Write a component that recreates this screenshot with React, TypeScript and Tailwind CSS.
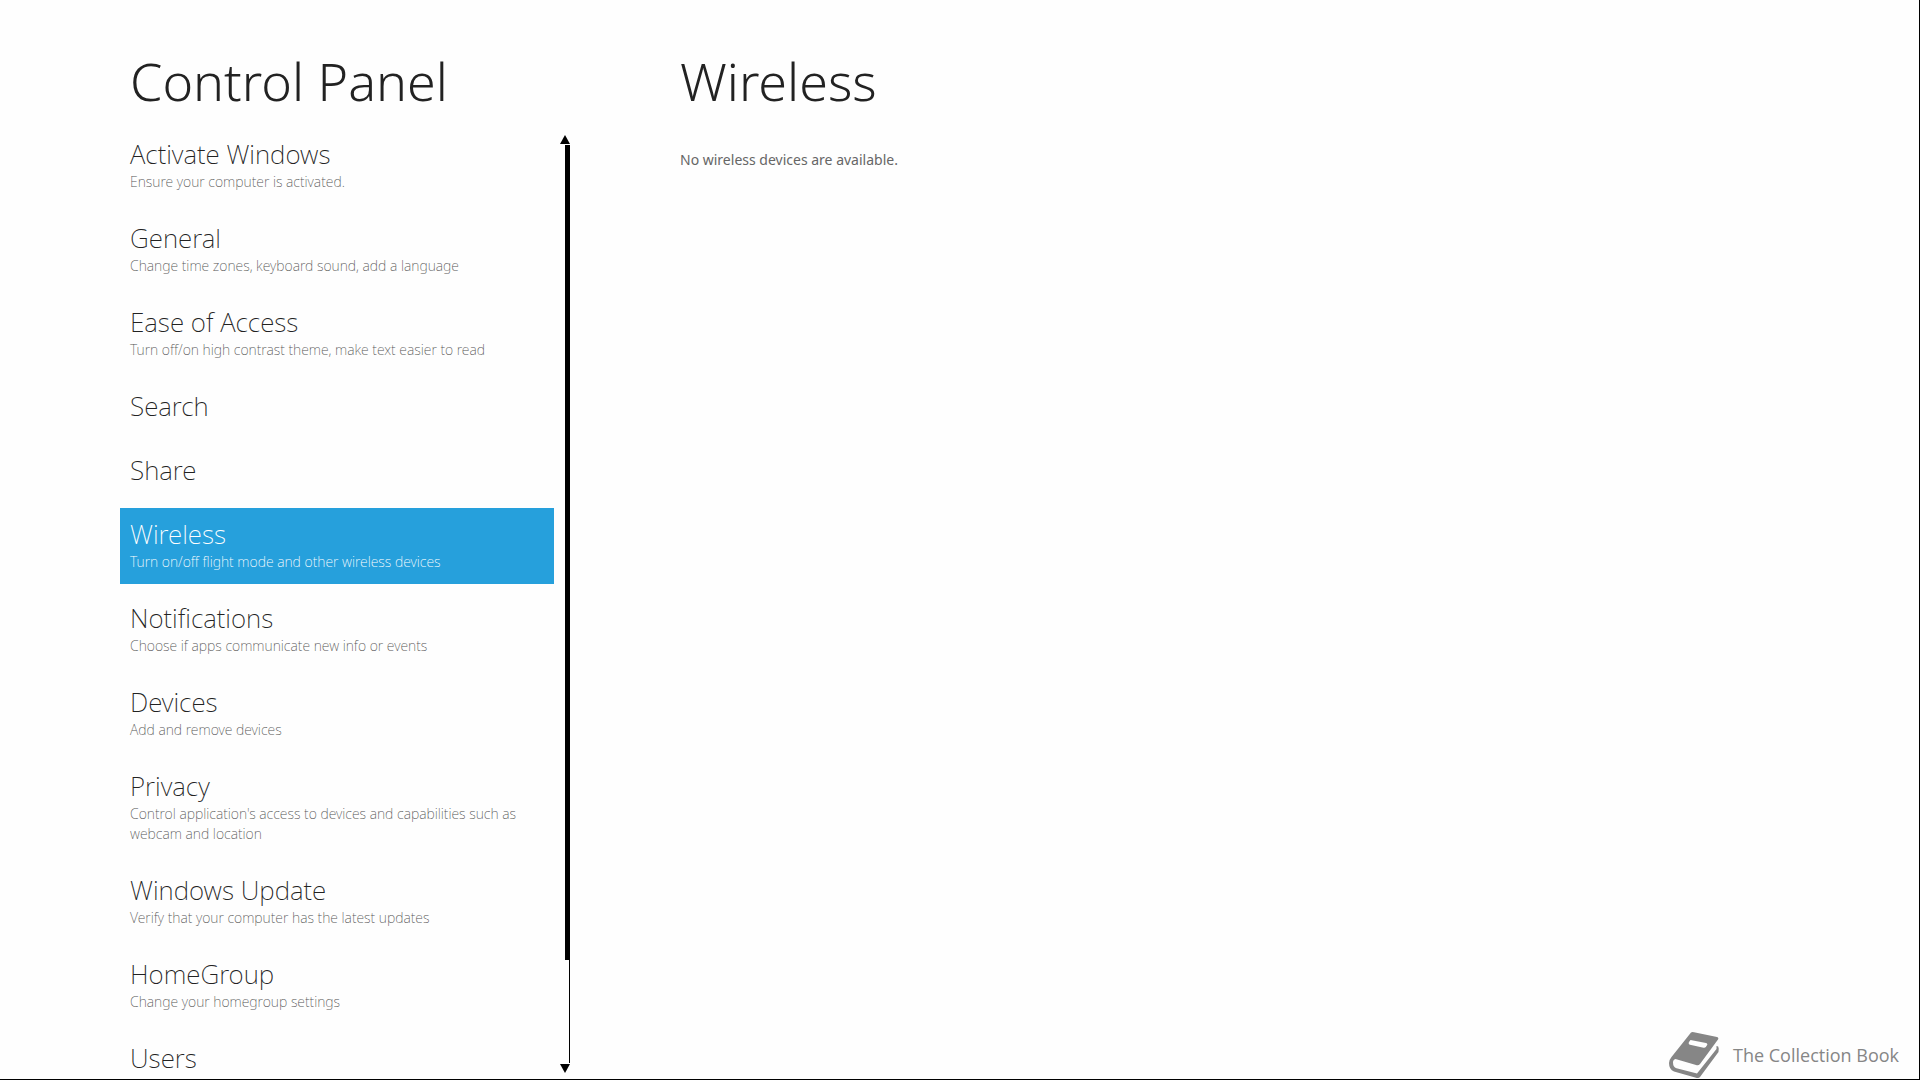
const items = [
  { title: "Activate Windows", note: "Ensure your computer is activated." },
  { title: "General", note: "Change time zones, keyboard sound, add a language" },
  { title: "Ease of Access", note: "Turn off/on high contrast theme, make text easier to read" },
  { title: "Search" },
  { title: "Share" },
  { title: "Wireless", note: "Turn on/off flight mode and other wireless devices" },
  { title: "Notifications", note: "Choose if apps communicate new info or events" },
  { title: "Devices", note: "Add and remove devices" },
  { title: "Privacy", note: "Control application's access to devices and capabilities such as webcam and location" },
  { title: "Windows Update", note: "Verify that your computer has the latest updates" },
  { title: "HomeGroup", note: "Change your homegroup settings" },
  { title: "Users" },
];

function BookIcon() {
  return (
    <svg viewBox="0 0 50 46" className="h-[46px] w-[50px] fill-[#868686]" aria-hidden="true">
      <path
        fillRule="evenodd"
        d="M22 0.5 Q23 -0.3 25 0.3 L48 5 Q50 5.600 49 7.500 L31 32 Q29.500 33.800 27 33 L6.500 27 Q4 27.500 4 30.500 Q4 35 7.500 36.300 L28 41.500 L47.500 17 L47.500 14 Q50 14 49.700 17 L49.500 20 L31 45 Q29.500 46.500 27 45.800 L5 39.500 Q0 37.500 0 31 Q0 28 2.500 25 Z M21.500 8 L37 11 Q39 11.500 38 13.200 L36.800 15 Q36 16 34.500 15.700 L21 12.800 Q19 12 20 10 Z"
      />
    </svg>
  );
}

export default function App() {
  return (
    <div className="flex h-screen overflow-hidden border-r border-b border-black bg-[#fefefe] pl-30 font-['Noto_Sans',sans-serif] font-extralight text-[#222]">
      <nav className="flex w-[450px] shrink-0 flex-col" aria-label="Control Panel">
        <h1 className="h-32 shrink-0 pt-12 pl-2.5 text-[52px] leading-[66px] font-light whitespace-nowrap">Control Panel</h1>
        <div className="flex min-h-0 flex-1 justify-between">
          <ul className="flex w-[434px] flex-col gap-2 overflow-hidden">
            {items.map((item) => {
              const active = item.title === "Wireless";
              return (
                <li key={item.title} className="shrink-0">
                  <button
                    type="button"
                    aria-current={active ? "page" : undefined}
                    className={`block w-full px-2.5 pt-2 pb-3 text-left ${active ? "bg-[#26a0dc] text-white" : ""}`}
                  >
                    <span className="block text-[26px] leading-9">{item.title}</span>
                    {item.note && (
                      <span className={`block text-sm leading-5 ${active ? "" : "text-[#555]"}`}>{item.note}</span>
                    )}
                  </button>
                </li>
              );
            })}
          </ul>
          <div className="flex w-2.5 shrink-0 flex-col gap-px pt-[7px] pb-1.5" aria-hidden="true">
            <svg viewBox="0 0 10 9" className="h-[9px] w-2.5 shrink-0">
              <path d="M5 0L10 9H0z" />
            </svg>
            <div className="min-h-0 flex-1 border-r border-black pl-[5px]">
              <div className="h-[88.8%] w-1 bg-black" />
            </div>
            <svg viewBox="0 0 10 9" className="h-[9px] w-2.5 shrink-0">
              <path d="M0 0H10L5 9z" />
            </svg>
          </div>
        </div>
      </nav>
      <main className="flex flex-1 flex-col pt-12 pl-[110px]">
        <h2 className="text-[52px] leading-[66px] font-light">Wireless</h2>
        <p className="mt-9 text-sm leading-5 font-normal text-[#666]">No wireless devices are available.</p>
        <footer className="mt-auto flex items-center justify-end gap-3.5 pr-5 pb-px font-['Open_Sans',sans-serif] text-lg font-normal text-[#868686]">
          <BookIcon />
          The Collection Book
        </footer>
      </main>
    </div>
  );
}
